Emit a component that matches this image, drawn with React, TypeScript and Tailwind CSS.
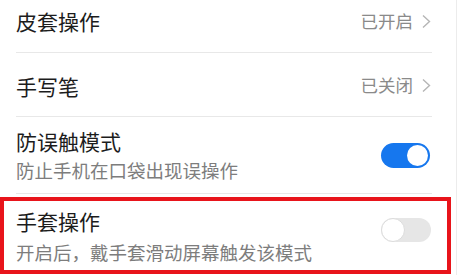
import React from "react";

const Chevron = () => (
  <svg width="11" height="15" viewBox="0 0 11 15" fill="none" className="ml-2">
    <path d="M2 1.5 L8.5 7.5 L2 13.5" stroke="#b5b5b5" strokeWidth="1.4" />
  </svg>
);

const Toggle = ({ on }: { on: boolean }) =>
  on ? (
    <div className="w-[49px] h-[25px] rounded-full bg-[#1677ee] flex items-center justify-end pr-[2px]">
      <div className="w-[21px] h-[21px] rounded-full bg-white" />
    </div>
  ) : (
    <div className="w-[50px] h-[24px] rounded-full bg-[#e6e6e6] flex items-center">
      <div className="w-[24px] h-[24px] rounded-full bg-white border border-[#dcdcdc]" />
    </div>
  );

export default function App() {
  return (
    <div
      className="relative w-[457px] h-[275px] overflow-hidden bg-white border-r border-[#ececec]"
      style={{ fontFamily: '"Noto Sans CJK SC", "Noto Sans", sans-serif' }}
    >
      {/* 皮套操作 */}
      <div className="ml-4 mr-6 h-[53px] pb-[10px] flex items-center justify-between border-b border-[#e8e8e8]">
        <span className="text-[21px] leading-[28px] text-[#1c1c1c]">皮套操作</span>
        <div className="flex items-center">
          <span className="text-[17.5px] text-[#8a8a8a]">已开启</span>
          <Chevron />
        </div>
      </div>

      {/* 手写笔 */}
      <div className="ml-4 mr-6 h-[64px] pt-[2px] flex items-center justify-between border-b border-[#e8e8e8]">
        <span className="text-[21px] leading-[28px] text-[#1c1c1c]">手写笔</span>
        <div className="flex items-center">
          <span className="text-[17.5px] text-[#8a8a8a]">已关闭</span>
          <Chevron />
        </div>
      </div>

      {/* 防误触模式 */}
      <div className="ml-4 mr-6 h-[77px] flex items-center justify-between border-b border-[#e8e8e8]">
        <div className="flex flex-col gap-[2px]">
          <span className="text-[21px] leading-[28px] text-[#1c1c1c]">防误触模式</span>
          <span className="text-[18.5px] leading-[26px] text-[#7d7d7d]">防止手机在口袋出现误操作</span>
        </div>
        <div className="mr-[2px]">
          <Toggle on />
        </div>
      </div>

      {/* 手套操作 */}
      <div className="ml-4 mr-6 h-[81px] pt-[13px] flex items-start justify-between">
        <div className="flex flex-col gap-[4px]">
          <span className="text-[21px] leading-[28px] text-[#1c1c1c]">手套操作</span>
          <span className="text-[18.5px] leading-[26px] text-[#7d7d7d]">开启后，戴手套滑动屏幕触发该模式</span>
        </div>
        <div className="mt-[11px] mr-px">
          <Toggle on={false} />
        </div>
      </div>

      {/* 红色标注框 */}
      <div className="absolute left-0 top-[197px] w-[451px] h-[77px] border-4 border-[#e8141b]" />
    </div>
  );
}
